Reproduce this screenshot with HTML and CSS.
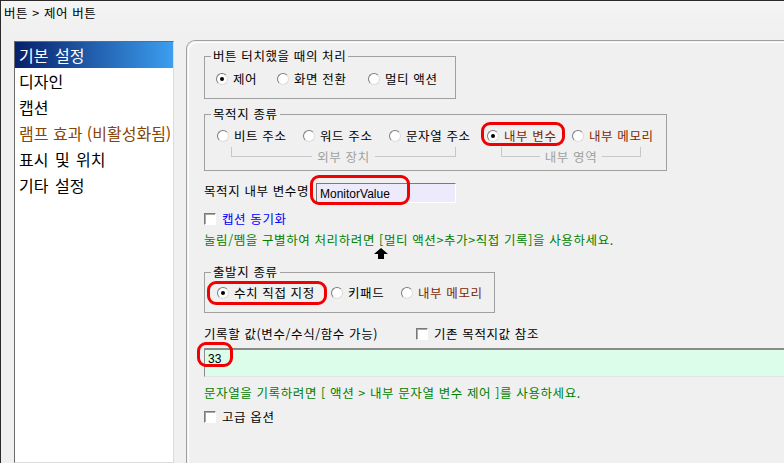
FILE: index.html
```html
<!DOCTYPE html>
<html lang="ko">
<head>
    <meta charset="UTF-8">
    <title>제어 버튼</title>
    <link rel="stylesheet" href="styles.css">
</head>
<body>
    <div class="window">
        <div class="titlebar">버튼 &gt; 제어 버튼</div>
        <div class="main">
            <ul class="menu">
                <li class="active">기본 설정</li>
                <li>디자인</li>
                <li>캡션</li>
                <li class="disabled">램프 효과 (비활성화됨)</li>
                <li>표시 및 위치</li>
                <li>기타 설정</li>
            </ul>
            <div class="panel">
                <fieldset class="group group-touch">
                    <legend>버튼 터치했을 때의 처리</legend>
                    <div class="options cols-touch">
                        <label class="opt"><span class="radio checked"></span>제어</label>
                        <label class="opt"><span class="radio"></span>화면 전환</label>
                        <label class="opt"><span class="radio"></span>멀티 액션</label>
                    </div>
                </fieldset>

                <fieldset class="group group-target">
                    <legend>목적지 종류</legend>
                    <div class="options cols-target">
                        <label class="opt"><span class="radio"></span>비트 주소</label>
                        <label class="opt"><span class="radio"></span>워드 주소</label>
                        <label class="opt"><span class="radio"></span>문자열 주소</label>
                        <label class="opt opt-inner marked"><span class="radio checked"></span>내부 변수<span class="mark mark-var"></span></label>
                        <label class="opt opt-inner"><span class="radio"></span>내부 메모리</label>
                    </div>
                    <div class="brackets">
                        <div class="bracket bracket-ext"><span class="line"></span><span class="caption">외부 장치</span><span class="line"></span></div>
                        <div class="bracket bracket-int"><span class="line"></span><span class="caption">내부 영역</span><span class="line"></span></div>
                    </div>
                </fieldset>

                <div class="field-row">
                    <span class="field-label">목적지 내부 변수명</span>
                    <span class="input-wrap">
                        <input class="name-input" type="text" value="MonitorValue">
                        <span class="mark mark-name"></span>
                    </span>
                </div>

                <label class="check-row row-sync"><span class="check"></span><span class="link">캡션 동기화</span></label>

                <p class="hint hint-multi">눌림/뗌을 구별하여 처리하려면 [멀티 액션&gt;추가&gt;직접 기록]을 사용하세요.</p>

                <div class="arrow-row">
                    <svg width="14" height="11" viewBox="0 0 14 11"><polygon points="7,0 14,6 10,6 10,11 4,11 4,6 0,6" fill="#000"/></svg>
                </div>

                <fieldset class="group group-source">
                    <legend>출발지 종류</legend>
                    <div class="options cols-source">
                        <label class="opt marked"><span class="radio checked"></span>수치 직접 지정<span class="mark mark-direct"></span></label>
                        <label class="opt"><span class="radio"></span>키패드</label>
                        <label class="opt opt-inner"><span class="radio"></span>내부 메모리</label>
                    </div>
                </fieldset>

                <div class="value-head">
                    <span class="value-label">기록할 값(변수/수식/함수 가능)</span>
                    <label class="check-row"><span class="check"></span>기존 목적지값 참조</label>
                </div>

                <div class="value-wrap">
                    <textarea class="value-input">33</textarea>
                    <span class="mark mark-value"></span>
                </div>

                <p class="hint hint-string">문자열을 기록하려면 [ 액션 &gt; 내부 문자열 변수 제어 ]를 사용하세요.</p>

                <label class="check-row row-advanced"><span class="check"></span>고급 옵션</label>
            </div>
        </div>
    </div>
</body>
</html>
```

FILE: styles.css
```css
* {
    box-sizing: border-box;
}

body {
    margin: 0;
    background: #f0f0f0;
    color: #000;
    font-family: "Noto Sans CJK KR", "Noto Sans", sans-serif;
    font-size: 12.5px;
    overflow: hidden;
}

.window {
    height: 463px;
    border-top: 1px solid #2b2b2b;
    border-left: 1px solid #2b2b2b;
    display: flex;
    flex-direction: column;
}

.titlebar {
    height: 26px;
    padding: 5px 0 0 3px;
    line-height: 14px;
    letter-spacing: 0.6px;
    background: linear-gradient(#f5f5f5, #f0f0f0);
}

.main {
    flex: 1;
    display: flex;
    min-height: 0;
    margin-top: 13px;
}

/* left menu */
.menu {
    list-style: none;
    margin: 1px 0 0 13px;
    padding: 0;
    width: 160px;
    background: #fff;
    border: 1px solid;
    border-color: #6a6a6a #dcdcdc #dcdcdc #6a6a6a;
    font-size: 16px;
    word-spacing: 2px;
}

.menu li {
    height: 26px;
    line-height: 26px;
    padding-left: 4px;
    white-space: nowrap;
}

.menu li.active {
    color: #fff;
    background: linear-gradient(to right, #08206a, #3c9ef0);
}

.menu li.disabled {
    color: #8b4500;
    word-spacing: 0;
}

/* right panel */
.panel {
    flex: 1;
    margin-left: 12px;
    padding: 0 0 0 17px;
    border-top: 1px solid #a0a0a0;
    border-left: 1px solid #a0a0a0;
    border-top-left-radius: 9px;
    box-shadow: inset 1px 1px 0 #f0f0f0, inset 2px 2px 0 #fff;
    letter-spacing: 0.6px;
    min-width: 0;
}

.group {
    margin: 0;
    padding: 0;
    border: 1px solid #a0a0a0;
    min-width: 0;
}

.group legend {
    margin-left: 6px;
    padding: 0 2px;
    line-height: 14px;
}

.group-touch {
    width: 252px;
    margin-top: 8px;
    padding: 8px 0 11px;
}

.group-target {
    width: 463px;
    margin-top: 8px;
    padding: 7px 0 13px;
}

.group-source {
    width: 291px;
    margin-top: 6px;
    padding: 6px 0 11px;
}

.options {
    display: grid;
    height: 16px;
    align-items: center;
    padding-left: 11px;
}

.cols-touch {
    grid-template-columns: 61px 91px auto;
}

.cols-target {
    padding-left: 12px;
    grid-template-columns: 86px 86px 98px 85px auto;
}

.cols-source {
    padding-left: 12px;
    grid-template-columns: 114px 70px auto;
}

.opt {
    display: flex;
    align-items: center;
    gap: 5px;
    height: 16px;
    line-height: 14px;
    white-space: nowrap;
}

.opt-inner {
    color: #7b2800;
}

.marked {
    position: relative;
}

.radio {
    position: relative;
    flex: none;
    width: 12px;
    height: 12px;
    border-radius: 50%;
    background: #fff;
    border: 1px solid;
    border-color: #7c7c7c #dcdcdc #dcdcdc #7c7c7c;
}

.radio.checked::after {
    content: "";
    position: absolute;
    left: 3px;
    top: 3px;
    width: 4px;
    height: 4px;
    border-radius: 50%;
    background: #000;
}

.brackets {
    display: flex;
    margin-top: 3px;
    padding-left: 26px;
}

.bracket {
    display: flex;
    align-items: flex-end;
    height: 10px;
    border-left: 1px solid #c8c8c8;
    border-right: 1px solid #c8c8c8;
}

.bracket-ext {
    width: 225px;
}

.bracket-int {
    width: 140px;
    margin-left: 45px;
}

.bracket .line {
    flex: 1;
    border-bottom: 1px solid #c8c8c8;
}

.bracket .caption {
    padding: 0 5px;
    line-height: 14px;
    margin-bottom: -7px;
    color: #a0a0a0;
    white-space: nowrap;
}

/* destination name */
.field-row {
    display: flex;
    align-items: flex-start;
    height: 22px;
    margin-top: 11px;
}

.field-label {
    width: 112px;
    margin-top: 2px;
    line-height: 14px;
    white-space: nowrap;
}

.input-wrap {
    position: relative;
    margin-top: 1px;
}

.name-input {
    display: block;
    width: 140px;
    height: 20px;
    margin: 0;
    padding: 1px 3px 0;
    border: 1px solid;
    border-color: #7a7a7a #fff #fff #7a7a7a;
    background: #edeafc;
    font-family: "Liberation Sans", sans-serif;
    font-size: 12px;
    line-height: 16px;
    color: #000;
    outline: none;
}

.check-row {
    display: flex;
    align-items: center;
    gap: 6px;
    height: 15px;
    line-height: 14px;
    white-space: nowrap;
}

.row-sync {
    margin-top: 7px;
}

.row-advanced {
    margin-top: 9px;
}

.check {
    flex: none;
    width: 12px;
    height: 12px;
    background: #fff;
    border: 1px solid;
    border-color: #7a7a7a #fff #fff #7a7a7a;
    box-shadow: inset 1px 1px 0 #a8a8a8;
}

.link {
    color: #0000ff;
}

.hint {
    margin: 0;
    line-height: 14px;
    color: #008000;
    white-space: nowrap;
}

.hint-multi {
    margin-top: 7px;
}

.hint-string {
    margin-top: 9px;
}

.arrow-row {
    height: 11px;
    margin-top: 1px;
    padding-left: 170px;
}

.arrow-row svg {
    display: block;
}

/* value to write */
.value-head {
    display: flex;
    align-items: center;
    height: 15px;
    margin-top: 13px;
}

.value-label {
    width: 212px;
    line-height: 14px;
    white-space: nowrap;
}

.value-wrap {
    position: relative;
    margin-top: 7px;
    margin-right: -20px;
}

.value-input {
    display: block;
    width: 100%;
    height: 29px;
    margin: 0;
    padding: 2px 3px;
    border: 1px solid;
    border-top: 2px solid #8a8a8a;
    border-color: #8a8a8a #fff #e4e4e4 #8a8a8a;
    background: #dcfde9;
    font-family: "Liberation Sans", sans-serif;
    font-size: 12px;
    line-height: 14px;
    color: #000;
    resize: none;
    overflow: hidden;
    outline: none;
}

/* red highlight marks */
.mark {
    position: absolute;
    border: 3px solid #f00000;
    border-radius: 9px;
    pointer-events: none;
}

.mark-var {
    left: -6px;
    top: -6px;
    width: 84px;
    height: 24px;
}

.mark-name {
    left: -6px;
    top: -8px;
    width: 100px;
    height: 30px;
}

.mark-direct {
    left: -10px;
    top: -4px;
    width: 120px;
    height: 24px;
}

.mark-value {
    left: -7px;
    top: -6px;
    width: 36px;
    height: 25px;
}
```
